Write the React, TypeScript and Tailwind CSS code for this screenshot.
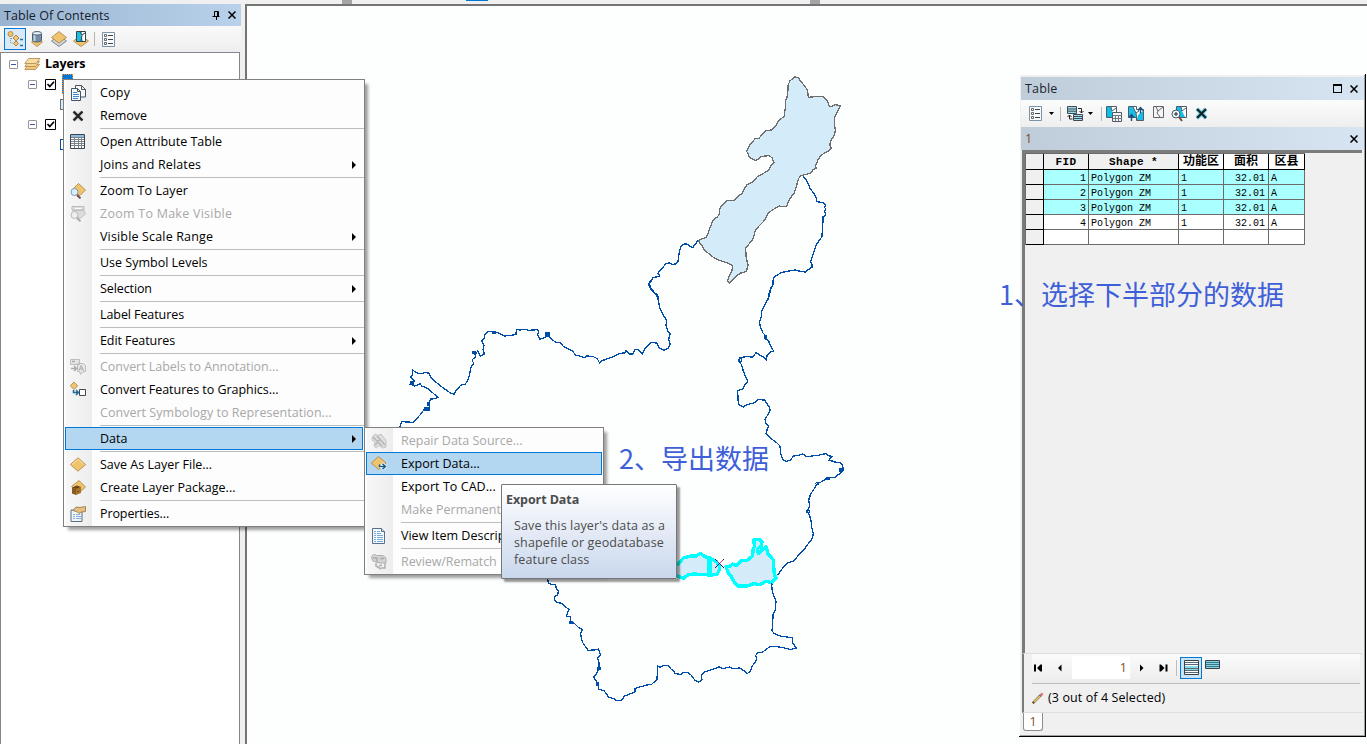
import React from "react";

type IconProps = { children: React.ReactNode; className?: string; box?: string };

const Svg = ({ children, className = "h-4 w-4", box = "0 0 16 16" }: IconProps) => (
  <svg viewBox={box} className={`block shrink-0 ${className}`} fill="none">
    {children}
  </svg>
);

const Diamond = ({ d = "M8 2 15.5 8 8 14 .5 8Z", off = false }: { d?: string; off?: boolean }) => (
  <path d={d} fill={off ? "#dcdcdc" : "#f0c46c"} stroke={off ? "#b9b9b9" : "#a98243"} strokeWidth=".8" />
);

const icons: Record<string, React.ReactNode> = {
  copy: (
    <Svg>
      <path d="M5.500 .5h6l4 4v7.500h-10z" fill="#f4f8fb" stroke="#48545f" />
      <path d="M1.500 3.500h6l3 3v9h-9z" fill="#f4f8fb" stroke="#48545f" />
      <path d="M7.500 3.500v3h3M11.500 .5v4h4" stroke="#48545f" />
      <path d="M3 7.500h4M3 9.500h6M3 11.500h6M3 13.500h5" stroke="#3c8bd0" />
    </Svg>
  ),
  remove: (
    <Svg>
      <path d="m4 4 8 8M12 4l-8 8" stroke="#d0d0d0" strokeWidth="4.500" />
      <path d="m3.500 3.500 9 9M12.500 3.500l-9 9" stroke="#222" strokeWidth="2.300" />
    </Svg>
  ),
  table: (
    <Svg>
      <path d="M.5 .5h14v14H.5z" fill="#fff" stroke="#3d4550" />
      <path d="M1 1h13v2H1z" fill="#8eb8dc" />
      <path d="M1 3.500h13M1 5.500h13M1 7.500h13M1 9.500h13M1 11.500h13M4.500 3v11M8.500 3v11M11.500 3v11" stroke="#7b838b" />
    </Svg>
  ),
  zoom: (
    <Svg>
      <Diamond d="M8.500 .5 15.500 7 10 12.500 2 7Z" />
      <circle cx="4.500" cy="9" r="3.500" fill="#d7effc" stroke="#7d9cb2" />
      <path d="m7 12 3.500 3.500" stroke="#6b4b42" strokeWidth="1.800" />
    </Svg>
  ),
  zoomOff: (
    <Svg>
      <path d="M2 .5h12v3.500H2z" fill="#ddd" stroke="#bbb" />
      <path d="M5 2.500h6" stroke="#fff" />
      <Diamond off d="M3 4.500h11l1.500 3.500L10 12.500 4 9Z" />
      <circle cx="4.500" cy="9" r="3.500" fill="#eee" stroke="#bbb" />
      <path d="m7 12 3.500 3.500" stroke="#aaa" strokeWidth="1.800" />
    </Svg>
  ),
  labels: (
    <Svg>
      <path d="M.5 .5h9v5h-9zM7.500 4.500h6l2 2v6l-3 .500-2 2.500-1-3h-2z" fill="#e6e6e6" stroke="#bcbcbc" />
      <path d="M2 2.500h3M1 9.500h5M4 7l2.500 2.500L4 12" stroke="#aaa" strokeWidth="1.500" />
      <path d="m9 11.500 2.200-5 2.200 5M10 10h3" stroke="#aaa" />
    </Svg>
  ),
  graphics: (
    <Svg>
      <Diamond d="M4 0 7.700 3.800 4 7.600 .3 3.800Z" />
      <path d="M3.500 8v2.500H8M6 8l2.500 2.500L6 13" stroke="#1c6b9b" strokeWidth="1.500" />
      <path d="M9.500 7.500h6v6h-6z" fill="#fff" stroke="#414850" />
    </Svg>
  ),
  layer: (
    <Svg>
      <Diamond d="M8 .8 15.600 7.500 8 14.200 .4 7.500Z" />
      <path d="M2 7.500 8 2.200l6 5.300" stroke="#fae1a6" />
    </Svg>
  ),
  pack: (
    <Svg>
      <Diamond d="M9 .5 15.500 7 9 13 1.500 6.500Z" />
      <path d="m2 7.500 4 1.500v6l-4-1.500z" fill="#8a5b1e" />
      <path d="m6 9 5-2v6L6 15z" fill="#a8742b" />
      <path d="m2 7.500 5-2 4 1.500-5 2z" fill="#69431b" />
      <path d="M7.500 11.500h1" stroke="#3b260f" />
    </Svg>
  ),
  props: (
    <Svg>
      <path d="M1 4h11v11.500H1z" fill="#eef5fb" stroke="#5b6d7c" />
      <path d="M3 8.500h2M3 10.500h2M3 12.500h2M6 8.500h4M6 10.500h5M6 12.500h5" stroke="#89b0d4" />
      <path d="M3 4.500 6 1l4 .5 5.500-1v5l-4 .500L9 7.500 7.500 6z" fill="#e3bf84" stroke="#96703b" strokeWidth=".8" />
    </Svg>
  ),
  repair: (
    <Svg>
      <path d="M1.500 4 4 1l3 1.500L10 1l5 6v7l-3 1-4-2.500L5 15l-2-2 1-4-3-2z" fill="#dedede" stroke="#c4c4c4" />
      <path d="m6 3 8 9M2 4l4 4 3-1M4 12l3-3 4 4" stroke="#b4b4b4" strokeWidth="1.300" />
    </Svg>
  ),
  export: (
    <Svg>
      <Diamond d="M7.500 .5 15 7 7.500 13.500 .3 7Z" />
      <path d="M8.500 10.500h5M11 7.500l3.500 3-3.500 3" stroke="#fff" strokeWidth="3" />
      <path d="M8.500 8.500v2h6M11.500 7.700 14.500 10.500l-3 2.800" stroke="#145f88" strokeWidth="1.500" />
    </Svg>
  ),
  page: (
    <Svg>
      <path d="M1.500 .5h9l3 3v12h-12z" fill="#f5faff" stroke="#58708b" />
      <path d="M10.500 .5v3h3" fill="#cfe1f3" stroke="#58708b" />
      <path d="M3 3.500h2M6 3.500h3M3 5.500h2M6 5.500h4M3 7.500h2M6 7.500h6M3 9.500h2M6 9.500h6M3 11.500h2M6 11.500h6M3 13.500h2M6 13.500h6" stroke="#69a0d2" strokeWidth=".9" />
    </Svg>
  ),
  review: (
    <Svg>
      <path d="M.5 4c0-4 4-4 5-2.500H12l3 2.500v5H8L2 7z" fill="#d3d3d3" stroke="#b0b0b0" />
      <path d="M2 4h4v4M9 4.500h4" stroke="#aaa" strokeWidth="1.300" />
      <path d="M5 9v3l5 3M14 9v5h-4M11 11l-3 1" stroke="#b0b0b0" strokeWidth="1.500" />
    </Svg>
  ),
};

type Item = { label: string; icon?: string; off?: boolean; sub?: boolean; active?: boolean; track?: string } | null;

const layerMenu: Item[] = [
  { label: "Copy", icon: "copy", track: "tracking-[0.2px]" },
  { label: "Remove", icon: "remove" },
  null,
  { label: "Open Attribute Table", icon: "table" },
  { label: "Joins and Relates", sub: true, track: "tracking-[0.15px]" },
  null,
  { label: "Zoom To Layer", icon: "zoom", track: "tracking-[0.12px]" },
  { label: "Zoom To Make Visible", icon: "zoomOff", off: true, track: "tracking-[0.25px]" },
  { label: "Visible Scale Range", sub: true, track: "tracking-[0.16px]" },
  null,
  { label: "Use Symbol Levels" },
  null,
  { label: "Selection", sub: true, track: "tracking-[-0.1px]" },
  null,
  { label: "Label Features", track: "tracking-[-0.08px]" },
  null,
  { label: "Edit Features", sub: true, track: "tracking-[-0.08px]" },
  null,
  { label: "Convert Labels to Annotation...", icon: "labels", off: true, track: "tracking-[-0.04px]" },
  { label: "Convert Features to Graphics...", icon: "graphics", track: "tracking-[-0.04px]" },
  { label: "Convert Symbology to Representation...", off: true, track: "tracking-[0.03px]" },
  null,
  { label: "Data", sub: true, active: true },
  null,
  { label: "Save As Layer File...", icon: "layer" },
  { label: "Create Layer Package...", icon: "pack", track: "tracking-[0.05px]" },
  null,
  { label: "Properties...", icon: "props", track: "tracking-[-0.1px]" },
];

const dataMenu: Item[] = [
  { label: "Repair Data Source...", icon: "repair", off: true },
  { label: "Export Data...", icon: "export", active: true },
  { label: "Export To CAD...", track: "tracking-[0.06px]" },
  { label: "Make Permanent", off: true },
  null,
  { label: "View Item Description...", icon: "page" },
  null,
  { label: "Review/Rematch", icon: "review", off: true, track: "tracking-[-0.08px]" },
];

const Menu = ({ items, place }: { items: Item[]; place: string }) => (
  <div
    className={`absolute border border-[#808080] bg-[linear-gradient(to_right,#fdfdfd_2px,#f7f7f7_2px,#ededed_28px,#fdfdfd_28px)] p-px shadow-[4px_4px_3px_-1px_rgba(0,0,0,0.38)] ${place}`}
  >
    {items.map((it, i) =>
      it === null ? (
        <div key={i} className="flex h-[3px] items-center pl-[35px]">
          <div className="-mr-px h-px flex-1 bg-[#bdbdbd]" />
        </div>
      ) : (
        <div
          key={i}
          className={`flex h-[23px] items-center overflow-hidden whitespace-nowrap border pl-1 pr-[6px] ${
            it.active ? "border-[#0078d7] bg-[#b3d6f1]" : "border-transparent"
          } ${it.off ? "text-[#a8a8a8]" : "text-black"}`}
        >
          <span className="mr-[14px] w-4 shrink-0">{it.icon && icons[it.icon]}</span>
          <span className={`flex-1 ${it.track ?? ""}`}>{it.label}</span>
          {it.sub && (
            <svg viewBox="0 0 4 8" className="h-2 w-1">
              <path d="M0 0 4 4 0 8Z" fill="#000" />
            </svg>
          )}
        </div>
      ),
    )}
  </div>
);

const blue = "#004da8";

const MapDrawing = () => (
  <svg viewBox="247 6 1120 738" className="block h-[738px] w-[1120px]" fill="none" shapeRendering="crispEdges">
    <g transform="translate(639.6 60) scale(.33333)" strokeWidth="3.9">
      <path
        stroke={blue}
        d="M177 541 171 547 160 562 151 560 145 553 135 551 124 559 119 576 115 605 107 612 98 614 90 609 80 610 70 622 58 634 55 640 60 644 58 649 40 653 35 663 26 672 35 690 50 703 56 720M490 347 495 355 500 360 506 372 512 386 524 402 530 415 531 425 550 428 559 435 555 442 558 447 555 455 559 465 550 470 550 485 547 530 540 540 530 555 524 571 515 600 512 606 517 612 517 622 507 628 497 636 482 634 467 630 447 633 425 638 412 646 402 652 398 680 392 688 388 700 386 720"
      />
      <path
        fill="#d4ecfa"
        stroke="#6e6e6e"
        d="M466 50 478 55 483 64 492 74 504 91 506 112 525 110 550 110 563 122 569 140 577 139 586 134 602 137 594 153 589 165 584 172 585 200 588 210 583 228 573 242 571 255 575 266 567 273 543 286 535 300 527 318 531 324 520 329 514 339 500 343 483 347 477 356 470 380 464 400 455 410 447 424 441 440 429 440 420 438 405 446 388 457 380 471 373 483 360 496 347 512 340 537 329 551 318 564 320 596 326 615 320 634 301 640 285 653 269 669 263 662 270 647 277 632 280 618 262 608 243 602 225 595 213 585 195 571 187 557 180 550 177 541 200 532 207 515 212 501 221 480 234 470 240 460 239 451 243 441 252 433 262 422 283 421 297 408 309 399 313 388 322 375 340 366 354 349 370 341 387 331 394 318 403 307 397 293 388 287 376 288 363 290 355 298 348 301 337 296 329 292 326 281 320 273 325 267 330 254 341 243 347 235 358 235 370 221 380 212 396 210 410 196 415 185 434 168 437 145 438 120 442 113 445 90 445 76 451 63Z"
      />
    </g>
    <g transform="translate(390 280) scale(.33333)" strokeWidth="3.9" stroke={blue}>
      <path d="M783 0 777 11 784 27 795 39 803 44 805 60 809 83 819 104 830 121 828 137 834 155 841 160 836 178 841 192 835 205 822 211 806 202 800 189 783 187 766 204 757 222 745 208 735 209 728 222 718 222 708 211 704 219 690 220 668 231 648 238 633 243 629 250 622 236 608 229 590 228 585 233 564 227 557 226 547 212 520 199 510 188 495 186 474 166 465 172 450 178 443 165 446 152 441 149 415 151 405 148 389 150 379 148 378 164 343 168 325 159 308 155 293 155 285 163 282 177 275 182 282 196 279 208 283 222 271 228 263 213 258 221 252 215 257 230 246 240 251 250 242 263 239 282 233 302 225 313 213 315 199 330 193 343 180 338 163 326 148 315 130 300 122 291 117 280 108 277 95 281 83 280 67 270 68 285 62 292 73 303 62 313 75 318 90 311 95 318 112 325 130 340 143 352 137 356 122 357 117 370 119 383 103 388 90 405 70 427 35 425 30 440 18 460" />
      <path d="M468 159h10v9h-10zM105 383h14v7h-14zM248 215h8v6h-8zM308 154h8v5h-8zM63 306h8v6h-8zM113 367h5v8h-5z" fill={blue} />
    </g>
    <g transform="translate(640 280) scale(.33333)" strokeWidth="3.9">
      <path
        stroke={blue}
        d="M401 0 399 15 392 25 388 48 378 68 366 90 364 109 359 125 360 137 368 158 375 165 375 176 386 183 391 197 401 213 390 217 381 226 380 241 371 231 362 227 348 218 338 231 318 230 299 233 297 245 304 253 309 270 315 287 323 304 313 316 309 326 293 333 295 374 310 381 320 374 342 369 355 359 374 360 379 369 386 378 391 390 384 403 375 418 378 430 386 437 382 447 378 460 396 478 409 487 420 498 422 521 429 539 440 544 453 539 460 528 474 527 488 522 500 530 516 528 535 526 557 521 568 528 577 529 567 540 588 547 600 547 607 556 611 569 600 580 583 593 563 593 545 605 531 612 522 627 512 642 506 660 509 679 501 693 509 708 513 720 515 741 520 761 515 780 502 794 495 806 481 819 461 843 444 848 425 868 413 886M396 912 395 920 398 929"
      />
      <path d="M297 236h9v10h-9zM528 608h9v5h-9zM500 691h8v8h-8z" stroke={blue} strokeWidth="3" />
      <path stroke={blue} fill={blue} d="M374 168h4v7h-4zM561 594h8v4h-8zM599 566h7v7h-7z" />
      <g stroke="#00ffff" strokeWidth="10" fill="#d4ecfa" strokeLinejoin="round">
        <path d="M90 850 115 852 130 834 152 828 168 828 182 820 194 830 210 834 229 845 239 858 238 870 230 884 210 885 190 884 165 882 147 883 130 895 112 888 90 880Z" />
        <path d="M209 834v52" strokeWidth="17" />
        <path d="M258 860 270 858 278 852 290 857 305 842 320 842 338 828 339 810 343 800 342 780 358 778 366 786 363 798 352 807 355 821 367 808 379 800 383 820 400 840 403 885 408 894 395 908 378 904 359 914 341 911 323 918 294 918 282 905 274 890 266 882Z" />
      </g>
      <path d="m226 838 25 26M251 838l-25 26" stroke="#23107b" strokeWidth="3" />
      <path d="m230 842 8 8 9-9" stroke="#e0306f" strokeWidth="3" />
    </g>
    <g transform="translate(530 560) scale(.33333)" strokeWidth="3.9" stroke={blue}>
      <path d="M50 40 55 68 64 74 77 74 79 86 86 93 82 105 74 109 73 119 80 127 95 130 104 139 117 148 113 158 110 168 121 171 123 188 132 189 145 202 157 209 152 220 154 233 157 246 165 258 174 271 193 270 206 267 211 285 203 294 207 307 207 326 200 341 191 350 202 370 207 388 223 393 236 411 252 416 258 421 275 421 283 408 300 402 315 396 315 385 333 380 350 375 365 373 381 358 383 318 389 322 400 316 415 316 422 326 431 334 435 341 453 343 460 338 475 338 485 347 494 360 506 366 516 360 514 347 521 337 540 331 556 325 568 320 578 326 599 321 610 326 628 324 642 332 652 341 662 332 665 320 673 310 680 297 677 286 684 278 697 277 719 260 740 260 761 263 781 269 799 264 787 248 788 233 770 231 750 228 733 221 726 212 728 195 729 165 736 150 738 124 730 104 725 82 725 70" />
      <path d="M119 185h8v4h-8zM204 322h7v6h-7zM201 368h5v8h-5z" fill={blue} />
    </g>
  </svg>
);

const Expander = () => (
  <span className="flex h-[9px] w-[9px] shrink-0 items-center justify-center rounded-[1px] border border-[#969696] bg-white">
    <span className="h-px w-[5px] bg-[#3d57a5]" />
  </span>
);

const Check = () => (
  <svg viewBox="0 0 11 11" className="h-[11px] w-[11px] shrink-0" fill="none">
    <path d="M.5 .5h10v10H.5z" fill="#fff" stroke="#000" />
    <path d="m2.500 5 2.300 2.500L9 2.800" stroke="#000" strokeWidth="1.700" />
  </svg>
);

const Cross = () => (
  <svg viewBox="0 0 8 8" className="h-2 w-2 shrink-0">
    <path d="m.5.5 7 7M7.500.5l-7 7" stroke="#000" strokeWidth="1.500" />
  </svg>
);

const ListIcon = () => (
  <Svg className="h-[15px] w-[13px]" box="0 0 13 15">
    <path d="M.5 .5h12v14H.5z" fill="#f8fbfd" stroke="#7c92a5" />
    <path d="M2.500 2.500h2v2h-2zM2.500 6.500h2v2h-2zM2.500 10.500h2v2h-2z" fill="#fff" stroke="#444" strokeWidth=".8" />
    <path d="M6 3.500h5M6 7.500h5M6 11.500h5" stroke="#444" />
  </Svg>
);

const Contents = () => (
  <aside className="flex w-[241px] shrink-0 flex-col">
    <div className="flex h-[22px] items-center bg-[linear-gradient(to_right,#99b4d1,#b9d1ea)] pl-1 pr-[5px] text-[#17202c]">
      <span className="flex-1 pt-[2px] tracking-[0.05px]">Table Of Contents</span>
      <svg viewBox="0 0 8 9" className="mr-2 h-[9px] w-2" fill="none">
        <path d="M2.500 5V.500h4V5M.500 5.500h7M4.500 6v3M5.500 1v4" stroke="#000" />
      </svg>
      <Cross />
    </div>
    <div className="flex h-[26px] items-center bg-[linear-gradient(#fafafa,#eeeeee)] pl-1">
      <span className="flex h-[22px] w-[22px] items-center justify-center border border-[#0078d7] bg-[#d9e9f7]">
        <Svg>
          <path d="M3.500 5v7H8M4 7.500h4" stroke="#999" strokeDasharray="1 1" />
          <circle cx="3.500" cy="3" r="2.500" fill="#f0c46c" stroke="#b59050" />
          <path d="m9 4 3 3-3 3-3-3zM9 10l2.500 2.500L9 15l-2.500-2.500z" fill="#f3c76c" stroke="#ab874d" />
          <path d="M13 8.500h3M13 14.500h3" stroke="#2c6f9f" strokeWidth="1.400" />
        </Svg>
      </span>
      <Svg className="ml-[3px] h-4 w-4">
        <Diamond d="M8 8.500 13.500 11 8 15.500 2.500 11Z" />
        <path d="M3.500 2.500v7c1 2 8 2 9 0v-7z" fill="#748ca6" stroke="#4f6071" />
        <path d="M5.500 3v7" stroke="#c7d5e3" strokeWidth="2" />
        <ellipse cx="8" cy="2.300" rx="4.500" ry="1.800" fill="#e4edf6" stroke="#52667a" />
      </Svg>
      <Svg className="ml-[6px] h-4 w-4">
        <path d="M8 4.500 15.500 10 8 15.500 .5 10Z" fill="#cfd3d6" stroke="#82888d" />
        <Diamond d="M8 .5 15.500 6.500 8 12 .5 6.500Z" />
      </Svg>
      <Svg className="ml-[6px] h-4 w-4">
        <Diamond d="M8 4.500 15.500 10 8 15.500 .5 10Z" />
        <path d="M3.500 .5h9v10h-9z" fill="#fff" stroke="#39434e" />
        <path d="M4 1h5l-1 3 2 6H4z" fill="#18bfe4" />
        <path d="m7 1 2 3 3-2M9 4l-1 6" stroke="#39434e" />
      </Svg>
      <span className="ml-[5px] mr-[7px] h-[14px] w-px bg-[#b5b5b5]" />
      <ListIcon />
    </div>
    <div className="mr-[1px] flex-1 border-l border-r border-t border-[#828790] bg-white">
      <div className="flex h-[22px] items-center pl-2 font-bold tracking-[-0.1px]">
        <Expander />
        <Svg className="ml-[6px] mr-1 h-[14px] w-[17px]" box="0 0 17 14">
          <path d="M4.500 7.500h11l-4 5H.8z" fill="#f0c779" stroke="#ad874b" strokeWidth=".8" />
          <path d="M4.500 4.500h11l-4 5H.8z" fill="#f5d592" stroke="#ad874b" strokeWidth=".8" />
          <path d="M4.500 1.500h11.500l-4 5H.8z" fill="#f9dda2" stroke="#ad874b" strokeWidth=".8" />
        </Svg>
        <span>Layers</span>
      </div>
      <div className="-mt-px flex h-[20px] items-center pl-[27px]">
        <Expander />
        <span className="ml-2"><Check /></span>
        <span className="ml-[6px] h-5 w-[11px] border border-dotted border-[#ff8c28] bg-[#0078d7]" />
      </div>
      <div className="flex h-[20px] items-center pl-[59px]">
        <span className="h-[11px] w-5 border border-[#6e6e6e] bg-[#d4ecfa]" />
      </div>
      <div className="flex h-[20px] items-center pl-[27px]">
        <Expander />
        <span className="ml-2"><Check /></span>
      </div>
      <div className="flex h-[20px] items-center pl-[59px]">
        <span className="h-[11px] w-5 border border-[#004da8] bg-white" />
      </div>
    </div>
  </aside>
);

const Drop = () => (
  <svg viewBox="0 0 5 3" className="h-[3px] w-[5px] shrink-0">
    <path d="M0 0h5L2.500 3Z" fill="#000" />
  </svg>
);

const MapTile = () => (
  <>
    <path d="M.5 .5h10v11H.5z" fill="#fff" stroke="#4f5b66" />
    <path d="M1 1h4l1 4 3 6H1z" fill="#0fc0e6" />
    <path d="m5 1 1 4 4-3" stroke="#4f5b66" />
  </>
);

const rows = ["1", "2", "3", "4", ""];
const cols = "grid grid-cols-[18px_45px_90px_45px_45px_36px]";

const Grid = () => (
  <div className="w-[280px] border-l border-t border-[#6b6b6b] bg-white font-['Liberation_Mono','Noto_Sans_CJK_SC',monospace] text-[10px] leading-[17px] tracking-normal text-black">
    <div className={`${cols} h-[16px] text-center font-bold`}>
      {["", "FID", "Shape *", "功能区", "面积", "区县"].map((h, i) => (
        <div
          key={i}
          className={`overflow-hidden whitespace-nowrap border-b border-r border-black ${
            i > 2 ? "bg-white text-[12px] leading-[16px]" : "bg-[#f0f0f0] text-[11px] leading-[17px] tracking-[0.4px]"
          }`}
        >
          {h}
        </div>
      ))}
    </div>
    {rows.map((n, i) => (
      <div key={i} className={`${cols} h-[15px] ${i < 3 ? "bg-[#aaffff]" : "bg-white"}`}>
        <div className="border-b border-r border-black bg-[#f0f0f0]" />
        <div className="h-[15px] border-b border-r border-[#6b6b6b] pr-[2px] text-right">{n}</div>
        <div className="h-[15px] border-b border-r border-[#6b6b6b] pl-[2px]">{n && "Polygon ZM"}</div>
        <div className="h-[15px] border-b border-r border-[#6b6b6b] pl-[2px]">{n && "1"}</div>
        <div className="h-[15px] border-b border-r border-[#6b6b6b] pr-[3px] text-right">{n && "32.01"}</div>
        <div className="h-[15px] border-b border-r border-[#6b6b6b] pl-[2px]">{n && "A"}</div>
      </div>
    ))}
  </div>
);

const Nav = ({ d }: { d: string }) => (
  <svg viewBox="0 0 9 8" className="h-2 w-[9px] shrink-0">
    <path d={d} fill="#000" />
  </svg>
);

const TableWindow = () => (
  <section className="absolute left-[1019px] top-[74px] flex h-[663px] w-[347px] flex-col border-b border-r border-black bg-[#f0f0f0] pl-[2px] pr-[1px] pt-[3px] shadow-[inset_1px_1px_0_#fff,inset_-1px_-1px_0_#a0a0a0]">
    <div className="flex h-[23px] items-center bg-[linear-gradient(to_right,#bfcddb,#d7e4f2)] pl-1 pr-[6px] text-[#1d2530]">
      <span className="flex-1 tracking-[0.15px]">Table</span>
      <span className="mr-2 h-[9px] w-[9px] border border-t-2 border-black" />
      <Cross />
    </div>
    <div className="flex h-[27px] items-center bg-[linear-gradient(#fcfcfc,#eeeeee)] pl-2">
      <ListIcon />
      <span className="ml-[7px]"><Drop /></span>
      <span className="ml-[6px] mr-[6px] h-[14px] w-px bg-[#b5b5b5]" />
      <Svg className="h-4 w-[17px]" box="0 0 17 16">
        <path d="M.5 .5h9v7h-9zM6.500 8.500h9v6h-9z" fill="#9adcec" stroke="#414b55" />
        <path d="M1 3h8M1 5.200h8M7 10.500h9M7 12.500h9" stroke="#414b55" />
        <path d="M11 2.500h3.500V7M12.500 5l2 2 2-2M5.500 13h-3V9M.5 11l2-2 2 2" stroke="#222" />
      </Svg>
      <span className="ml-1"><Drop /></span>
      <span className="ml-[8px] mr-1 h-[14px] w-px bg-[#b5b5b5]" />
      <Svg>
        <MapTile />
        <path d="M6.500 6.500h9v9h-9z" fill="#f4f4f4" stroke="#4f5b66" />
        <path d="M7 9.500h9M7 12.500h9M9.500 9v6M12.500 9v6" stroke="#6e7a85" />
      </Svg>
      <Svg className="ml-[6px] h-4 w-4">
        <path d="M.5 .5h8v3h7v11h-7v-3h-8z" fill="#fff" stroke="#4f5b66" />
        <path d="M1 1h4l3 6v4H1zM10 9l5-4v9H9z" fill="#16bfe8" />
        <path d="m5 1 3 6 1 7M8 7l3-2" stroke="#4f5b66" />
        <path d="M12.500 7.500V2M10 4.500l2.500-3 2.500 3M3.500 9v6M1 11.500l2.500-3 2.500 3" stroke="#174f7a" strokeWidth="1.400" />
      </Svg>
      <Svg className="mb-1 ml-[9px] h-3 w-[11px]" box="0 0 11 12">
        <path d="M.5 .5h10v11H.5z" fill="#f5f5f5" stroke="#62666a" />
        <path d="m3 1 2 4 5-4M5 5l-1 2 3 4" stroke="#62666a" />
      </Svg>
      <Svg className="ml-[7px] h-4 w-4">
        <g transform="translate(5 0)"><MapTile /></g>
        <circle cx="5" cy="8" r="4" fill="#eef8ff" stroke="#4f5b66" />
        <path d="M3 8h4M5 6v4" stroke="#222" />
        <path d="m8 11 3 4" stroke="#744e3a" strokeWidth="2" />
      </Svg>
      <Svg className="ml-[8px] h-[13px] w-[13px]" box="0 0 13 13">
        <path d="m2 2 9 9M11 2l-9 9" stroke="#69d7ec" strokeWidth="4" />
        <path d="m2 2 9 9M11 2l-9 9" stroke="#17242c" strokeWidth="2.300" />
      </Svg>
    </div>
    <div className="flex h-[23px] items-center bg-[linear-gradient(to_right,#bfcddb,#d7e4f2)] pl-1 pr-[6px] text-[#7a4a1c]">
      <span className="flex-1">1</span>
      <Cross />
    </div>
    <div className="ml-[1px] mr-[2px] h-[503px] border-l-[3px] border-t-[3px] border-[#7b7b7b] bg-[#f0f0f0]">
      <Grid />
    </div>
    <div className="ml-[1px] mr-[2px] flex h-[60px] flex-col border-b border-l-2 border-t border-b-[#dedede] border-l-[#7b7b7b] border-t-[#dedede]">
      <div className="ml-2 mr-[2px] flex h-[30px] items-center border-b border-[#bcbcbc] bg-[linear-gradient(#fbfbfb,#ececec)] pb-[2px] pl-[2px]">
        <Nav d="M0 .5h2v7H0zM3 4 6.500 .5H8v7H6.500z" />
        <span className="ml-[13px]"><Nav d="M2 4 5.500 .5v7Z" /></span>
        <span className="ml-[7px] h-[23px] w-[58px] bg-white pr-[3px] text-right leading-[23px] text-[#80501d]">1</span>
        <span className="ml-[8px]"><Nav d="M2 .5 5.500 4 2 7.500Z" /></span>
        <span className="ml-3"><Nav d="M.5 .5H2L5.500 4 2 7.500H.5zM6.500 .5h2v7h-2z" /></span>
        <span className="ml-2 mr-[3px] h-[16px] w-px bg-[#bcbcbc]" />
        <span className="flex h-[22px] w-[22px] items-center justify-center border border-[#0078d7] bg-[#cce4f7]">
          <Svg className="h-[15px] w-[15px]" box="0 0 15 15">
            <path d="M.5 .5h14v14H.5z" fill="#fff" stroke="#394249" />
            <path d="M1 2.500h13M1 4.500h13M1 8.500h13M1 10.500h13M1 12.500h13" stroke="#5a6a70" />
            <path d="M1 6.500h13M1 7.500h13M1 9.500h13" stroke="#86dbea" />
          </Svg>
        </span>
        <Svg className="mb-[6px] ml-[3px] h-[10px] w-[15px]" box="0 0 15 10">
          <path d="M.5 .5h14v8H.5z" fill="#83d4e4" stroke="#394249" />
          <path d="M1 2.500h13M1 4.500h13M1 6.500h13" stroke="#397884" />
        </Svg>
      </div>
      <div className="flex h-[28px] items-center pl-2 tracking-[0.1px] text-black">
        <Svg className="mr-1 h-3 w-3" box="0 0 12 12">
          <path d="m.8 11.200 8-8" stroke="#5b4b33" strokeWidth="2.400" />
          <path d="m2 10 6-6" stroke="#f2cc70" strokeWidth="1.600" />
          <path d="m8.500 3.500 2.200-2.200" stroke="#d77b85" strokeWidth="2.500" />
        </Svg>
        (3 out of 4 Selected)
      </div>
    </div>
    <div className="ml-[2px] h-[18px] w-5 rounded-b-[3px] border border-t-0 border-[#8d8d8d] bg-white text-center leading-[17px] text-[#80501d]">1</div>
  </section>
);

const Note = ({ children, place }: { children: React.ReactNode; place: string }) => (
  <div className={`absolute whitespace-nowrap font-['Noto_Sans_CJK_SC',sans-serif] text-[27px] leading-[36px] tracking-normal text-[#3f5fd8] ${place}`}>
    {children}
  </div>
);

export default function App() {
  return (
    <main className="relative flex h-[744px] w-[1367px] flex-col overflow-hidden bg-[#f0f0f0] font-['Open_Sans','Noto_Sans',sans-serif] text-[12.5px] leading-4 text-black">
      <div className="flex h-1 items-start">
        <span className="ml-[342px] h-1 w-[10px] bg-[#a5a5a5]" />
        <span className="ml-[114px] h-px w-[22px] bg-[#0078d7]" />
        <span className="ml-[322px] h-1 w-[10px] bg-[#a5a5a5]" />
      </div>
      <div className="flex min-h-0 flex-1">
        <Contents />
        <div className="ml-1 min-w-0 flex-1 overflow-hidden border-l-2 border-t-2 border-[#747474] bg-[#fdfefe]">
          <MapDrawing />
        </div>
      </div>
      <Note place="left-[619px] top-[440px]">2、导出数据</Note>
      <TableWindow />
      <Note place="left-[999px] top-[276px]">1、选择下半部分的数据</Note>
      <Menu items={layerMenu} place="left-[63px] top-[79px] w-[302px]" />
      <Menu items={dataMenu} place="left-[364px] top-[427px] w-[240px]" />
      <div className="absolute left-[501px] top-[484px] h-[95px] w-[176px] rounded-[1px] border border-[#767676] bg-[linear-gradient(#ffffff,#c9d7ed)] shadow-[3px_3px_2px_rgba(0,0,0,0.4)]">
        <p className="mt-[7px] pl-1 font-bold tracking-[-0.08px] text-[#4c4c4c]">Export Data</p>
        <p className="mt-[9px] whitespace-nowrap pl-3 leading-[17px] tracking-[0.13px] text-[#4c4c4c]">
          Save this layer's data as a<br />shapefile or geodatabase<br />feature class
        </p>
      </div>
    </main>
  );
}
